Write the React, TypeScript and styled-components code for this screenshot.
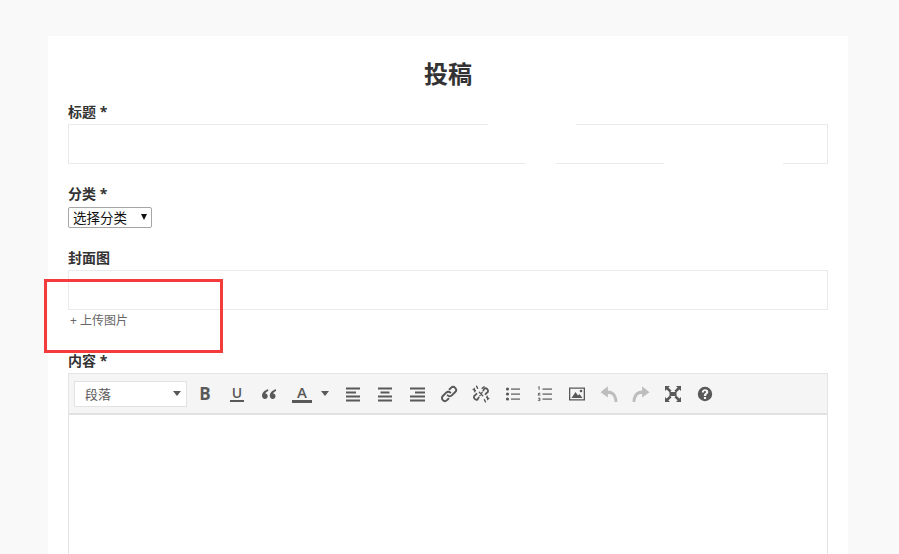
import React from "react";
import styled, { createGlobalStyle } from "styled-components";

const Global = createGlobalStyle`
  html, body { margin: 0; padding: 0; height: 100%; overflow: hidden; background: #f9f9f9; }
  #root { height: 100%; }
`;

const Page = styled.div`
  height: 554px;
  overflow: hidden;
  padding-top: 36px;
  box-sizing: border-box;
  font-family: "Open Sans", "Noto Sans CJK SC", sans-serif;
  color: #333;
`;

const Card = styled.main`
  position: relative;
  width: 760px;
  margin-left: 48px;
  padding: 24px 20px 40px;
  background: #fff;
`;

const Title = styled.h1`
  margin: 0 0 14px;
  font-size: 24px;
  line-height: 28px;
  font-weight: 700;
  text-align: center;
  color: #333;
`;

const Field = styled.div<{ $gap: number }>`
  margin-bottom: ${(p) => p.$gap}px;
`;

const Label = styled.label`
  display: block;
  font-size: 14px;
  line-height: 20px;
  font-weight: 700;
  color: #333;
  margin-bottom: 2px;
`;

const TextBox = styled.div`
  height: 40px;
  box-sizing: border-box;
  border: 1px solid #eaeaea;
  background: #fff;
`;

const NativeSelect = styled.div`
  display: inline-flex;
  align-items: center;
  justify-content: space-between;
  width: 84px;
  height: 21px;
  padding: 0 4px;
  margin-top: -1px;
  box-sizing: border-box;
  border: 1px solid #a6a6a6;
  border-radius: 2px;
  font-size: 13.5px;
  color: #111;
  background: #fff;
`;

const SelectCaret = styled.span`
  width: 0;
  height: 0;
  border-left: 3.5px solid transparent;
  border-right: 3.5px solid transparent;
  border-top: 6px solid #111;
`;

const UploadLink = styled.a`
  display: block;
  margin-top: 2px;
  padding-left: 2px;
  font-size: 12px;
  line-height: 18px;
  color: #666;
`;

const Editor = styled.div`
  border: 1px solid #e4e4e4;
  height: 260px;
`;

const Toolbar = styled.div`
  display: flex;
  align-items: center;
  height: 41px;
  padding: 0 5px;
  box-sizing: border-box;
  background: #f5f5f5;
  border-bottom: 2px solid #e2e2e2;
`;

const FormatSelect = styled.div`
  display: flex;
  align-items: center;
  justify-content: space-between;
  width: 113px;
  height: 26px;
  margin-right: 2px;
  padding: 0 5px 0 10px;
  box-sizing: border-box;
  background: #fff;
  border: 1px solid #e2e2e2;
  font-size: 13px;
  color: #595959;
`;

const Caret = styled.span`
  display: inline-block;
  width: 0;
  height: 0;
  border-left: 4px solid transparent;
  border-right: 4px solid transparent;
  border-top: 5px solid #595959;
`;

const ToolButton = styled.div<{ $wide?: boolean; $muted?: boolean }>`
  display: flex;
  align-items: center;
  justify-content: ${(p) => (p.$wide ? "flex-start" : "center")};
  flex: 0 0 ${(p) => (p.$wide ? 52 : 32)}px;
  height: 30px;
  color: ${(p) => (p.$muted ? "#bdbdbd" : "#595959")};
  padding-left: ${(p) => (p.$wide ? 7 : 0)}px;
  box-sizing: border-box;
  svg { display: block; }
`;

const Bold = styled.span`
  font-size: 17px;
  font-weight: 700;
  line-height: 1;
`;

const Under = styled.span`
  font-size: 14px;
  font-weight: 600;
  line-height: 14px;
  border-bottom: 2px solid #595959;
  padding: 0 2px;
`;

const ColorA = styled.span`
  display: block;
  width: 20px;
  margin-right: 9px;
  font-size: 15px;
  font-weight: 600;
  line-height: 15px;
  text-align: center;
  border-bottom: 3px solid #595959;
`;

const Annotation = styled.div`
  position: absolute;
  left: -4px;
  top: 243px;
  width: 179px;
  height: 74px;
  box-sizing: border-box;
  border: 3px solid #f43c3c;
  pointer-events: none;
`;

const WhitePatch = styled.span<{ $x: number; $y: number; $w: number }>`
  position: absolute;
  left: ${(p) => p.$x - 48}px;
  top: ${(p) => p.$y - 36}px;
  width: ${(p) => p.$w}px;
  height: 3px;
  background: #fff;
`;

const Icon = ({ children, size = 16 }: { children: React.ReactNode; size?: number }) => (
  <svg width={size} height={size} viewBox="0 0 16 16" fill="currentColor">{children}</svg>
);

const Lines = ({ rows }: { rows: [number, number][] }) => (
  <Icon>
    {rows.map(([x, w], i) => (
      <rect key={i} x={x} y={1.5 + i * 4} width={w} height="2" />
    ))}
  </Icon>
);

const App = () => (
  <Page>
    <Global />
    <Card>
      <Title>投稿</Title>
      <Field $gap={20}>
        <Label>标题 *</Label>
        <TextBox />
      </Field>
      <Field $gap={20}>
        <Label>分类 *</Label>
        <NativeSelect>选择分类<SelectCaret /></NativeSelect>
      </Field>
      <Field $gap={21}>
        <Label>封面图</Label>
        <TextBox />
        <UploadLink>+ 上传图片</UploadLink>
      </Field>
      <Label>内容 *</Label>
      <Editor>
        <Toolbar>
          <FormatSelect>段落<Caret /></FormatSelect>
          <ToolButton><Bold>B</Bold></ToolButton>
          <ToolButton><Under>U</Under></ToolButton>
          <ToolButton>
            <Icon>
              <path d="M7.2 3.2 C4 4 1 6.4 1 9.8 C1 11.8 2.2 13 3.9 13 C5.5 13 6.7 11.8 6.7 10.2 C6.7 8.7 5.6 7.7 4.3 7.6 C4.7 6.6 5.8 5.6 7.2 5 Z" />
              <path d="M15 3.2 C11.8 4 8.8 6.4 8.8 9.8 C8.8 11.8 10 13 11.7 13 C13.3 13 14.5 11.8 14.5 10.2 C14.5 8.7 13.4 7.7 12.1 7.6 C12.5 6.6 13.6 5.6 15 5 Z" />
            </Icon>
          </ToolButton>
          <ToolButton $wide><ColorA>A</ColorA><Caret /></ToolButton>
          <ToolButton><Lines rows={[[1, 14], [1, 10], [1, 14], [1, 14]]} /></ToolButton>
          <ToolButton><Lines rows={[[1, 14], [3.5, 9], [1, 14], [1, 14]]} /></ToolButton>
          <ToolButton><Lines rows={[[1, 15], [6, 10], [1, 15], [1, 15]]} /></ToolButton>
          <ToolButton>
            <svg width="18" height="18" viewBox="0 0 16 16" fill="none" stroke="currentColor" strokeWidth="1.7" strokeLinecap="round">
              <path d="M6.8 9.2 a2.6 2.6 0 0 0 3.7 0 l3-3 a2.6 2.6 0 0 0 -3.7 -3.7 l-1.3 1.3" />
              <path d="M9.2 6.8 a2.6 2.6 0 0 0 -3.7 0 l-3 3 a2.6 2.6 0 0 0 3.7 3.7 l1.3 -1.3" />
            </svg>
          </ToolButton>
          <ToolButton>
            <svg width="18" height="18" viewBox="0 0 16 16" fill="none" stroke="currentColor" strokeWidth="1.6" strokeLinecap="round">
              <path d="M10 5 l1.2 -2 a2.4 2.4 0 0 1 3 3 l-2.2 2.2" />
              <path d="M6 11 l-1.2 2 a2.4 2.4 0 0 1 -3 -3 l2.2 -2.2" />
              <path d="M9 3 l1.8 -1.4 M3 5 L1 4 M5 3 L4 1 M13 11 L15 12 M11 13 L12 15 M6.5 6.5 L9.5 9.5 M9 6.5 L7 9.5" strokeWidth="1.2" />
              <path d="M2.5 6 L2 3 M13.5 10 L14 13" strokeWidth="1.2" />
            </svg>
          </ToolButton>
          <ToolButton>
            <Icon>
              <circle cx="2.5" cy="3" r="1.6" /><circle cx="2.5" cy="8" r="1.6" /><circle cx="2.5" cy="13" r="1.6" />
              <rect x="6" y="2.5" width="9" height="1.2" /><rect x="6" y="7.5" width="9" height="1.2" /><rect x="6" y="12.5" width="9" height="1.2" />
            </Icon>
          </ToolButton>
          <ToolButton>
            <Icon>
              <path d="M1 1.2 L2.6 0.6 V5 H1.6 V2 L1 2.2 Z M0.8 10 C0.8 8.4 3.4 8.1 3.4 9.1 C3.4 9.8 1.9 10.6 1.8 11 H3.6 V11.8 H0.8 V11 C1 10.2 2.4 9.6 2.4 9.2 C2.4 8.9 1.7 9 1.5 10 Z" transform="translate(0 -0.3) scale(1 0.82)" />
              <path d="M1 11.8 H3.4 V12.4 L2.4 13 C3.2 13 3.6 13.5 3.6 14 C3.6 15.3 1.2 15.4 0.8 14.7 L1.2 14.1 C1.6 14.6 2.6 14.6 2.6 14 C2.6 13.6 2 13.5 1.6 13.6 V13 L2.3 12.5 H1 Z" />
              <rect x="5.5" y="2.5" width="9.5" height="1.2" /><rect x="5.5" y="7.5" width="9.5" height="1.2" /><rect x="5.5" y="12.5" width="9.5" height="1.2" />
            </Icon>
          </ToolButton>
          <ToolButton>
            <Icon>
              <path fillRule="evenodd" d="M0 1.5 H16 V14.5 H0 Z M1.3 2.8 V13.2 H14.7 V2.8 Z" />
              <path d="M2.5 12 L6.5 6 L9 9.5 L10.5 8 L13.5 12 Z" />
              <circle cx="12" cy="5" r="1.3" />
            </Icon>
          </ToolButton>
          <ToolButton $muted>
            <svg width="18" height="18" viewBox="0 0 16 16" fill="currentColor">
              <path d="M7 1 L0.5 6.5 L7 11 V8 C10.5 8 12.5 9.5 13 15 H15.5 C15.5 8.5 12 5 7 4.8 Z" />
            </svg>
          </ToolButton>
          <ToolButton $muted>
            <svg width="18" height="18" viewBox="0 0 16 16" fill="currentColor">
              <path d="M9 1 L15.5 6.5 L9 11 V8 C5.5 8 3.5 9.5 3 15 H0.5 C0.5 8.5 4 5 9 4.8 Z" />
            </svg>
          </ToolButton>
          <ToolButton>
            <Icon>
              <path d="M0 0 H5 L3.4 1.6 L6.6 4.8 L4.8 6.6 L1.6 3.4 L0 5 Z" />
              <path d="M16 0 V5 L14.4 3.4 L11.2 6.6 L9.4 4.8 L12.6 1.6 L11 0 Z" />
              <path d="M0 16 V11 L1.6 12.6 L4.8 9.4 L6.6 11.2 L3.4 14.4 L5 16 Z" />
              <path d="M16 16 H11 L12.6 14.4 L9.4 11.2 L11.2 9.4 L14.4 12.6 L16 11 Z" />
              <rect x="4.5" y="6" width="7" height="4" />
            </Icon>
          </ToolButton>
          <ToolButton>
            <Icon>
              <path fillRule="evenodd" d="M8 .8 a7.2 7.2 0 1 0 0 14.4 a7.2 7.2 0 0 0 0 -14.4 Z M6.9 11 H9.1 V13 H6.9 Z M8.1 3.2 C10 3.2 11.3 4.3 11.3 5.9 C11.3 7.9 9.1 8 9.1 9.9 H6.9 C6.9 7.3 9 7.2 9 6 C9 5.4 8.6 5.1 8 5.1 C7.3 5.1 6.9 5.6 6.9 6.4 H4.8 C4.8 4.5 6.1 3.2 8.1 3.2 Z" />
            </Icon>
          </ToolButton>
        </Toolbar>
      </Editor>
      <Annotation />
      <WhitePatch $x={488} $y={123} $w={88} />
      <WhitePatch $x={526} $y={162} $w={30} />
      <WhitePatch $x={664} $y={162} $w={119} />
    </Card>
  </Page>
);

export default App;
